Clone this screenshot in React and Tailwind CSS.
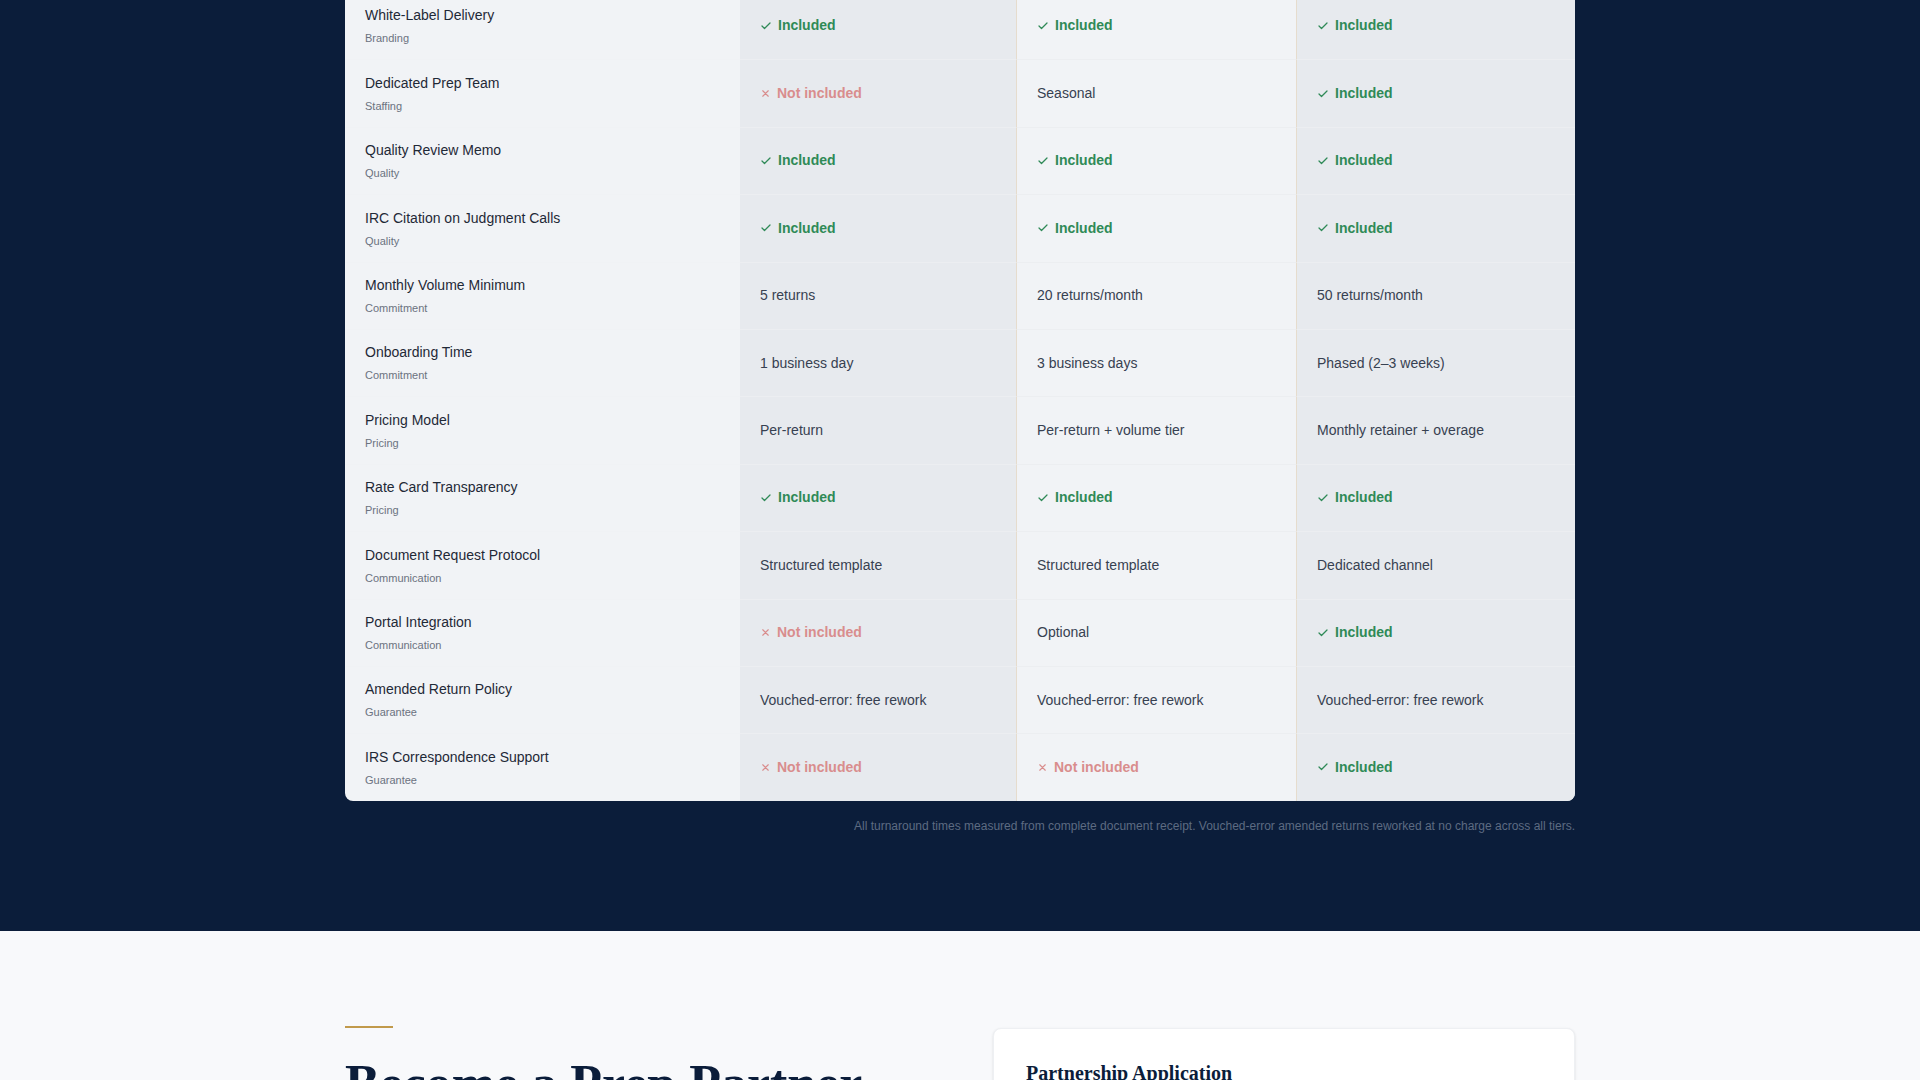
import React from 'react';

const rows = [
  ['White-Label Delivery', 'Branding', 'Y', 'Y', 'Y'],
  ['Dedicated Prep Team', 'Staffing', 'N', 'Seasonal', 'Y'],
  ['Quality Review Memo', 'Quality', 'Y', 'Y', 'Y'],
  ['IRC Citation on Judgment Calls', 'Quality', 'Y', 'Y', 'Y'],
  ['Monthly Volume Minimum', 'Commitment', '5 returns', '20 returns/month', '50 returns/month'],
  ['Onboarding Time', 'Commitment', '1 business day', '3 business days', 'Phased (2–3 weeks)'],
  ['Pricing Model', 'Pricing', 'Per-return', 'Per-return + volume tier', 'Monthly retainer + overage'],
  ['Rate Card Transparency', 'Pricing', 'Y', 'Y', 'Y'],
  ['Document Request Protocol', 'Communication', 'Structured template', 'Structured template', 'Dedicated channel'],
  ['Portal Integration', 'Communication', 'N', 'Optional', 'Y'],
  ['Amended Return Policy', 'Guarantee', 'Vouched-error: free rework', 'Vouched-error: free rework', 'Vouched-error: free rework'],
  ['IRS Correspondence Support', 'Guarantee', 'N', 'N', 'Y'],
];

const Value = ({ v }) => {
  if (v === 'Y')
    return (
      <span className="flex items-center gap-1.5 font-bold text-[#2f8a57]">
        <svg width="12" height="12" viewBox="0 0 24 24" fill="none" stroke="currentColor" strokeWidth="2.5" strokeLinecap="round" strokeLinejoin="round"><path d="M20 6 9 17l-5-5" /></svg>
        Included
      </span>
    );
  if (v === 'N')
    return (
      <span className="flex items-center gap-1.5 font-bold text-[#d98d8d]">
        <svg width="11" height="11" viewBox="0 0 24 24" fill="none" stroke="currentColor" strokeWidth="2.5" strokeLinecap="round"><path d="M18 6 6 18M6 6l12 12" /></svg>
        Not included
      </span>
    );
  return <span className="text-[#374151]">{v}</span>;
};

export default function App() {
  return (
    <div className="min-h-screen bg-[#f8f9fb]" style={{ fontFamily: '"Liberation Sans", Arial, sans-serif' }}>
      <section className="bg-[#0b1d3a] pb-[97px] overflow-hidden">
        <div className="max-w-[1230px] mx-auto">
          <div className="-mt-[8px] bg-[#f1f3f6] rounded-b-lg overflow-hidden">
            {rows.map((r, i) => (
              <div key={i} className="grid grid-cols-[395px_276px_281px_278px] h-[67.4px] text-[14px]">
                <div className={`flex flex-col justify-center px-5 ${i ? 'border-t border-[#f0f2f5]' : ''}`}>
                  <div className="text-[#1f2937]">{r[0]}</div>
                  <div className="text-[11px] text-[#6b7280] mt-1">{r[1]}</div>
                </div>
                <div className={`flex items-center px-5 bg-[#e7eaee] ${i ? 'border-t border-[#eceef1]' : ''}`}><Value v={r[2]} /></div>
                <div className={`flex items-center px-5 bg-[#f1f3f6] border-x border-[#e6dccd] ${i ? 'border-t border-t-[#eceef1]' : ''}`}><Value v={r[3]} /></div>
                <div className={`flex items-center px-5 bg-[#e7eaee] ${i ? 'border-t border-[#eceef1]' : ''}`}><Value v={r[4]} /></div>
              </div>
            ))}
          </div>
          <p className="text-right text-xs text-[#5d6b82] mt-[17px]">
            All turnaround times measured from complete document receipt. Vouched-error amended returns reworked at no charge across all tiers.
          </p>
        </div>
      </section>
      <section className="pt-[95px]">
        <div className="max-w-[1230px] mx-auto grid grid-cols-[648px_582px] items-start">
          <div>
            <div className="w-12 h-[2px] bg-[#c19a4b] mb-[30px]" />
            <h2 className="text-[52px] font-bold text-[#0b1d3a] leading-none" style={{ fontFamily: '"Liberation Serif", serif' }}>Become a Prep Partner</h2>
          </div>
          <div className="bg-white rounded-lg shadow-sm border border-[#eef0f3] mt-[2px] px-8 pt-[30px] h-[300px]">
            <h3 className="text-xl font-bold text-[#0b1d3a]" style={{ fontFamily: '"Liberation Serif", serif' }}>Partnership Application</h3>
          </div>
        </div>
      </section>
    </div>
  );
}
